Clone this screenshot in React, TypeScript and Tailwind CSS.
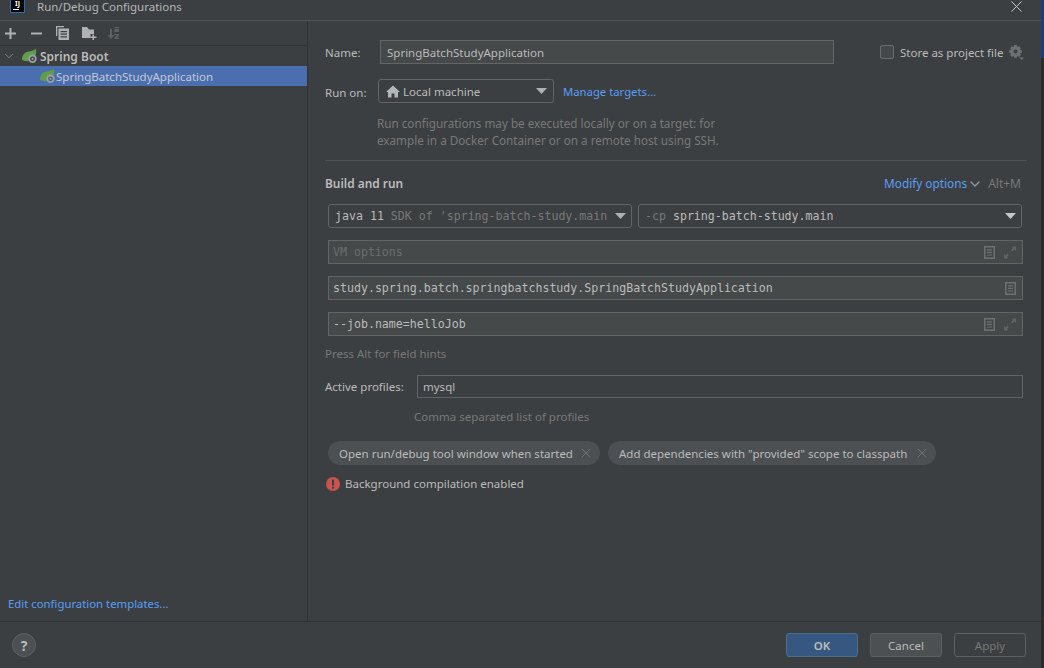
import { ChevronDown, X } from "lucide-react";

function SpringIcon({ inner = "#3c3f41" }: { inner?: string }) {
  return (
    <svg width="16" height="16" viewBox="0 0 16 16" className="shrink-0">
      <path d="M0 11.5C0 7 3 4 7 3.5C10 3 12.5 2.5 14 0.5C14.6 4 14 7.5 12 10C10 13 3 14.5 0 11.5Z" fill="#5f9f4c" />
      <circle cx="10.5" cy="10.8" r="4.2" fill="#9aa0a3" />
      <circle cx="10.5" cy="10.8" r="2.4" fill={inner} />
      <circle cx="10.5" cy="10.8" r="1.1" fill="#9aa0a3" />
    </svg>
  );
}

function PageIcon() {
  return (
    <svg width="11" height="13" viewBox="0 0 11 13" className="shrink-0">
      <path fillRule="evenodd" d="M0 0H11V13H0ZM1.5 1.5V11.5H9.5V1.5Z" fill="#6e7173" />
      <path d="M3 3.2H8V4.4H3ZM3 5.8H8V7H3ZM3 8.4H8V9.6H3Z" fill="#6e7173" />
    </svg>
  );
}

function ExpandIcon() {
  return (
    <svg width="12" height="13" viewBox="0 0 12 13" className="shrink-0">
      <path d="M7.5 0.5H12V5L10.5 3.5L8.5 5.5L7 4L9 2Z" fill="#5f6365" />
      <path d="M4.5 12.5H0V8L1.5 9.5L3.5 7.5L5 9L3 11Z" fill="#5f6365" />
    </svg>
  );
}

function Caret({ color = "#aeb0b2" }: { color?: string }) {
  return (
    <svg width="11" height="6" viewBox="0 0 11 6" className="shrink-0">
      <path d="M0 0H11L5.5 6Z" fill={color} />
    </svg>
  );
}

function Field({ children, icons = 2 }: { children?: React.ReactNode; icons?: number }) {
  return (
    <div className="h-6 ml-[3px] mr-[4px] flex items-center border border-[#646464] bg-[#45494a] pl-[4px] pr-[6px] font-['DejaVu_Sans_Mono',monospace] text-[11.6px] text-[#bbbbbb]">
      <span className="flex-1 whitespace-pre">{children}</span>
      {icons === 2 ? (
        <div className="flex items-center gap-[9px]">
          <PageIcon />
          <ExpandIcon />
        </div>
      ) : (
        <PageIcon />
      )}
    </div>
  );
}

function Chip({ label, width }: { label: string; width: string }) {
  return (
    <div className={`h-6 ${width} rounded-full bg-[#4c5052] flex items-center justify-between pl-[11px] pr-[6px] text-[#bbbbbb]`}>
      <span className="whitespace-nowrap">{label}</span>
      <X size={16} strokeWidth={1.4} className="text-[#73777a]" />
    </div>
  );
}

export default function App() {
  return (
    <div className="flex h-[668px] w-[1044px] overflow-hidden bg-[#3c3f41] text-[11.5px] leading-[17px] text-[#bbbbbb] font-['Noto_Sans','Open_Sans',sans-serif]">
      <div className="flex flex-col w-[1041px]">
        {/* title bar */}
        <div className="h-[21px] shrink-0 flex items-start border-b border-[#515151] relative">
          <div className="w-[15px] h-[13px] ml-[10px] bg-black border-b border-x border-[#2470b3] flex flex-col items-center text-[7px] leading-[8px] font-bold text-white">
            <span>IJ</span>
            <div className="w-[6px] h-px bg-white mt-px self-start ml-[2px]" />
          </div>
          <span className="ml-[12px] leading-[14px] text-[#b4b6b7]">Run/Debug Configurations</span>
          <svg width="11" height="11" viewBox="0 0 11 11" className="absolute right-[19px] top-px">
            <path d="M0.5 0.5L10.5 10.5M10.5 0.5L0.5 10.5" stroke="#c8c8c8" strokeWidth="1" />
          </svg>
        </div>

        <div className="flex flex-1 min-h-0">
          {/* left panel */}
          <div className="w-[308px] shrink-0 flex flex-col border-r border-[#323232]">
            <div className="h-[25px] shrink-0 flex items-center pl-[5px] border-b border-[#323232]">
              <svg width="11" height="11" viewBox="0 0 11 11">
                <path d="M4.5 0H6.5V4.5H11V6.5H6.5V11H4.5V6.5H0V4.5H4.5Z" fill="#afb1b3" />
              </svg>
              <svg width="11" height="11" viewBox="0 0 11 11" className="ml-[15px]">
                <path d="M0 4.5H11V6.5H0Z" fill="#afb1b3" />
              </svg>
              <svg width="13" height="14" viewBox="0 0 13 14" className="ml-[14px]">
                <path d="M0 0H8V1.3H1.3V10H0Z" fill="#afb1b3" />
                <path fillRule="evenodd" d="M2.5 2.5H13V14H2.5ZM4.5 5V6.2H11V5ZM4.5 7.6V8.8H11V7.6ZM4.5 10.2V11.4H11V10.2Z" fill="#afb1b3" />
              </svg>
              <svg width="15" height="14" viewBox="0 0 15 14" className="ml-[13px]">
                <path d="M0 1H5L7 3.5H12V8H8.5V12H0Z" fill="#afb1b3" />
                <path d="M10.5 8.5H12V10.5H14.5V12H12V14H10.5V12H8.5V10.5H10.5Z" fill="#afb1b3" />
              </svg>
              <svg width="13" height="14" viewBox="0 0 13 14" className="ml-[10px]">
                <path d="M3 3H5V9H7.5L4 13L0.5 9H3Z" fill="#5e6163" />
                <path d="M7.5 1H12V2.2H7.5ZM7.5 3H12V6H7.5ZM7.5 8H12V9.2L9.5 11.8H12V13H7.5V11.8L10 9.2H7.5Z" fill="#5e6163" />
              </svg>
            </div>
            <div className="h-5 flex items-center pl-[2px] shrink-0">
              <ChevronDown size={14} strokeWidth={1.5} className="text-[#8c8e90]" />
              <div className="ml-[6px]"><SpringIcon /></div>
              <span className="ml-[2px] font-semibold text-[12px] text-[#bbbbbb]">Spring Boot</span>
            </div>
            <div className="h-5 flex items-center pl-[40px] bg-[#4b6eaf] shrink-0">
              <SpringIcon inner="#4a5a78" />
              <span className="text-[#c4c9d2]">SpringBatchStudyApplication</span>
            </div>
            <div className="mt-auto mb-[9px] pl-[8px] text-[11.35px] text-[#589df6]">Edit configuration templates...</div>
          </div>

          {/* right panel */}
          <div className="flex-1 min-w-0 pl-[17px] pr-[14px] pt-[19px]">
            <div className="flex items-center h-6">
              <span className="w-[55px]">Name:</span>
              <div className="w-[454px] h-6 border border-[#646464] bg-[#45494a] flex items-center pl-[6px]">SpringBatchStudyApplication</div>
              <div className="ml-[46px] w-[14px] h-[14px] rounded-[2px] border border-[#6b6b6b] bg-[#43494a] shrink-0" />
              <span className="ml-[6px] whitespace-nowrap">Store as project file</span>
              <svg width="15" height="15" viewBox="0 0 15 15" className="ml-[6px] shrink-0">
                <path fillRule="evenodd" d="M5 0H8L8.4 2L10.2 1.2L12 3.2L10.8 4.8L12.8 5.2V8L10.8 8.4L12 10L10 12L8.4 10.8L8 12.8H5L4.6 10.8L3 12L1 10L2.2 8.4L0.2 8V5.2L2.2 4.8L1 3.2L3 1.2L4.6 2ZM6.5 4.6A2 2 0 1 0 6.5 8.6A2 2 0 1 0 6.5 4.6Z" fill="#6b6f72" />
                <path d="M10 12.5H15L12.5 15Z" fill="#6b6f72" />
              </svg>
            </div>

            <div className="flex items-center h-6 mt-[15px]">
              <span className="w-[53px] translate-y-px">Run on:</span>
              <div className="w-[176px] h-6 rounded-[3px] border border-[#646464] bg-[#3c3f41] flex items-center pl-[7px] pr-[6px]">
                <svg width="14" height="13" viewBox="0 0 14 13" className="shrink-0">
                  <path d="M7 0.5L14 7H12V12.5H8.5V8.5H5.5V12.5H2V7H0Z" fill="#b4b6b8" />
                </svg>
                <span className="ml-[3px] flex-1">Local machine</span>
                <Caret />
              </div>
              <span className="ml-[9px] text-[11.3px] text-[#589df6]">Manage targets...</span>
            </div>

            <div className="mt-[12px] ml-[52px] text-[11.7px] text-[#787878]">
              <div>Run configurations may be executed locally or on a target: for</div>
              <div>example in a Docker Container or on a remote host using SSH.</div>
            </div>

            <div className="h-px bg-[#515151] mt-[11px]" />

            <div className="flex items-center mt-[14px] h-[17px]">
              <span className="font-semibold text-[11.9px] flex-1">Build and run</span>
              <span className="text-[11.8px] text-[#589df6]">Modify options</span>
              <ChevronDown size={16} strokeWidth={2} className="text-[#8c9aa8]" />
              <span className="ml-[5px] mr-[6px] text-[12px] text-[#787878]">Alt+M</span>
            </div>

            <div className="flex mt-[12px] ml-[3px] mr-[5px] gap-[6px] h-6 font-['DejaVu_Sans_Mono',monospace] text-[11.6px]">
              <div className="w-[304px] rounded-[3px] border border-[#646464] flex items-center pl-[6px] pr-[5px] whitespace-pre">
                <span className="flex-1 overflow-hidden"><span>java 11</span> <span className="text-[#787878]">SDK of 'spring-batch-study.main</span></span>
                <Caret />
              </div>
              <div className="flex-1 rounded-[3px] border border-[#646464] flex items-center pl-[6px] pr-[5px] whitespace-pre">
                <span className="flex-1"><span className="text-[#787878]">-cp</span> spring-batch-study.main</span>
                <Caret color="#c4c6c8" />
              </div>
            </div>

            <div className="mt-[12px]"><Field><span className="text-[#6a6d6f]">VM options</span></Field></div>
            <div className="mt-[12px]"><Field icons={1}>study.spring.batch.springbatchstudy.SpringBatchStudyApplication</Field></div>
            <div className="mt-[12px]"><Field>--job.name=helloJob</Field></div>

            <div className="mt-[9px] text-[#787878]">Press Alt for field hints</div>

            <div className="flex items-center mt-[13px] mr-[4px]">
              <span className="w-[92px]">Active profiles:</span>
              <div className="flex-1 h-[23px] border border-[#646464] flex items-center pl-[5px]">mysql</div>
            </div>

            <div className="mt-[10px] ml-[89px] text-[#787878]">Comma separated list of profiles</div>

            <div className="flex mt-[16px] ml-[3px] gap-[8px]">
              <Chip label="Open run/debug tool window when started" width="w-[272px]" />
              <Chip label={'Add dependencies with "provided" scope to classpath'} width="w-[328px]" />
            </div>

            <div className="flex items-center mt-[10px] ml-[1px]">
              <svg width="14" height="14" viewBox="0 0 14 14" className="shrink-0">
                <circle cx="7" cy="7" r="7" fill="#c75450" />
                <rect x="6" y="2.5" width="2" height="6" fill="#3c3f41" />
                <rect x="6" y="9.7" width="2" height="2" fill="#3c3f41" />
              </svg>
              <span className="ml-[5px]">Background compilation enabled</span>
            </div>
          </div>
        </div>

        {/* footer */}
        <div className="h-[47px] shrink-0 border-t border-[#323232] flex items-center pl-[12px] pr-[15px]">
          <div className="w-6 h-6 rounded-full bg-[#4c5052] border border-[#5e6060] flex items-center justify-center font-bold text-[14px] text-[#bbbbbb]">?</div>
          <div className="ml-auto flex gap-[12px]">
            <div className="w-[72px] h-6 rounded-[3px] bg-[#365880] border border-[#4c708c] flex items-center justify-center font-semibold">OK</div>
            <div className="w-[72px] h-6 rounded-[3px] bg-[#4c5052] border border-[#5e6060] flex items-center justify-center">Cancel</div>
            <div className="w-[72px] h-6 rounded-[3px] border border-[#5e6060] flex items-center justify-center text-[#777777]">Apply</div>
          </div>
        </div>
      </div>
      <div className="w-[3px] shrink-0 flex flex-col bg-[#2b2b2b]">
        <div className="h-[58px] bg-[#1c3d78]" />
      </div>
    </div>
  );
}
